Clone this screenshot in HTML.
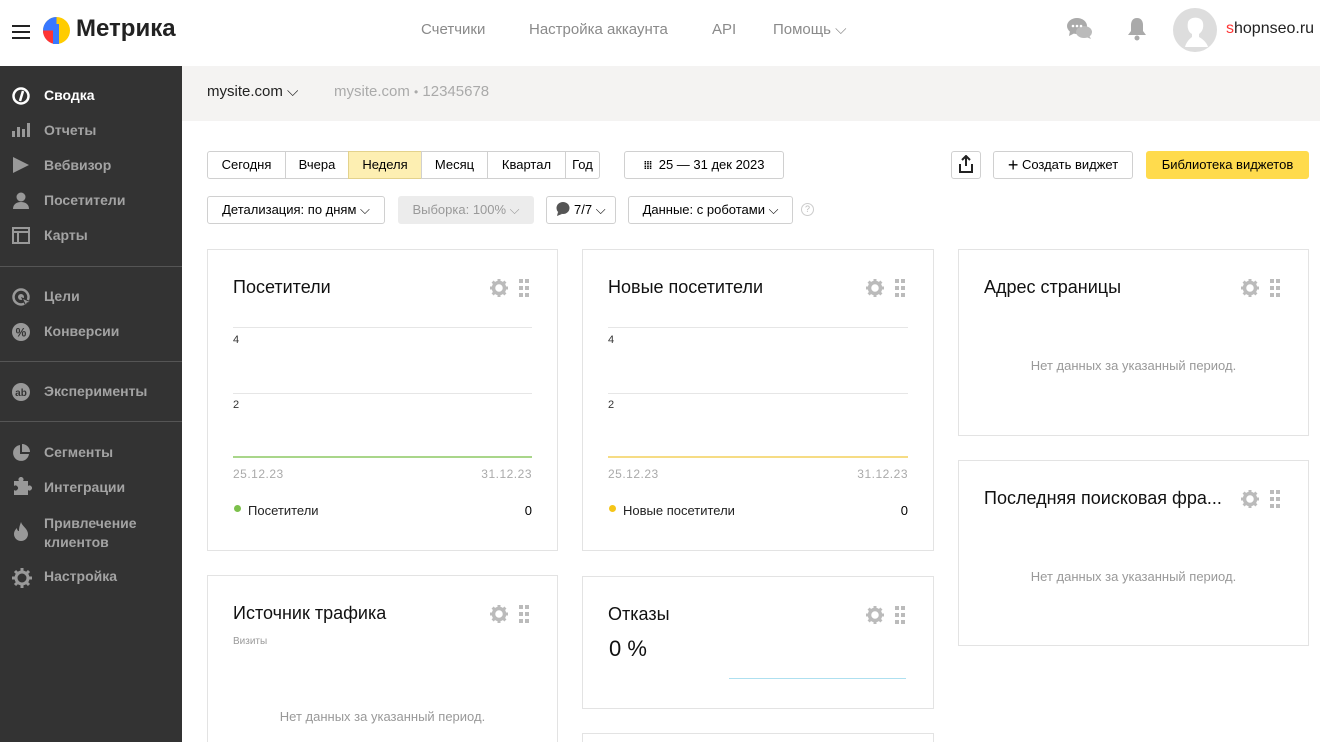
<!DOCTYPE html>
<html style="width:1320px;height:742px;overflow:hidden"><head><meta charset="utf-8"><style>
*{box-sizing:border-box;margin:0;padding:0}
body{width:1320px;height:742px;overflow:hidden;background:#fff;font-family:"Liberation Sans",Arial,sans-serif;position:relative;color:#000}
.a{position:absolute;white-space:nowrap}
.nav{font-size:15px;color:#8a8a8a;top:21px}
.side{position:absolute;left:0;top:66px;width:182px;height:676px;background:#333}
.si{position:absolute;left:44px;font-size:14px;font-weight:bold;color:#a3a3a3}
.ic{position:absolute;left:12px}
.sep{position:absolute;left:0;width:182px;height:1px;background:#555}
.btn{position:absolute;height:28px;border:1px solid #d0d0d0;border-radius:3px;font-size:13px;line-height:26px;text-align:center;background:#fff}
.card{position:absolute;border:1px solid #e3e3e3;background:#fff}
.ct{position:absolute;left:25px;top:27px;font-size:18px;color:#111}
.tools{position:absolute;right:24px;top:28px;width:43px;height:20px}
.nd{position:absolute;left:0;right:0;text-align:center;font-size:13px;color:#999}
.gl{position:absolute;left:25px;right:25px;height:1px;background:#e6e6e6}
.sm{position:absolute;font-size:11px;color:#333}
.dt{position:absolute;font-size:12px;color:#aaa;letter-spacing:.5px}
</style></head><body>
<svg width="0" height="0" style="position:absolute"><defs>
<g id="tl">
<g transform="translate(9,10)"><circle r="5.5" fill="none" stroke="#bbb" stroke-width="3.5"/><g stroke="#bbb" stroke-width="3"><path d="M0-9V-5M0 5V9M-9 0H-5M5 0H9M-6.4-6.4L-4-4M4 4L6.4 6.4M6.4-6.4L4-4M-4 4L-6.4 6.4"/></g></g>
<g fill="#bbb"><rect x="29" y="1" width="4" height="4"/><rect x="35" y="1" width="4" height="4"/><rect x="29" y="8" width="4" height="4"/><rect x="35" y="8" width="4" height="4"/><rect x="29" y="15" width="4" height="4"/><rect x="35" y="15" width="4" height="4"/></g>
</g></defs></svg>
<!-- header -->
<div class="a" style="left:12px;top:25px;width:18px">
<div style="height:2px;background:#222;margin-bottom:4px"></div><div style="height:2px;background:#222;margin-bottom:4px"></div><div style="height:2px;background:#222"></div></div>
<svg class="a" style="left:43px;top:17px" width="27" height="27" viewBox="0 0 27 27">
<circle cx="13.5" cy="13.5" r="13.5" fill="#ffcc00"/>
<path d="M13.5 0A13.5 13.5 0 0 0 0 13.5 13.5 13.5 0 0 0 13.5 27Z" fill="#3878ff"/>
<path d="M0 13.5A13.5 13.5 0 0 0 10 26.6L10 13.5Z" fill="#ff3333"/>
<rect x="10" y="7" width="6" height="20" fill="#3878ff"/></svg>
<div class="a" style="left:76px;top:15px;font-size:24px;font-weight:bold;color:#222">Метрика</div>
<div class="a nav" style="left:421px">Счетчики</div>
<div class="a nav" style="left:529px">Настройка аккаунта</div>
<div class="a nav" style="left:712px">API</div>
<div class="a nav" style="left:773px">Помощь ⌵</div>
<svg class="a" style="left:1067px;top:17px" width="26" height="24" viewBox="0 0 26 24"><ellipse cx="10" cy="9" rx="10" ry="8" fill="#aaa"/><path d="M3 14l-1 5 6-3z" fill="#aaa"/><ellipse cx="17" cy="15" rx="8" ry="6" fill="#bbb"/><path d="M22 18l2 4-5-2z" fill="#bbb"/><circle cx="6" cy="9" r="1.3" fill="#fff"/><circle cx="10" cy="9" r="1.3" fill="#fff"/><circle cx="14" cy="9" r="1.3" fill="#fff"/></svg>
<svg class="a" style="left:1127px;top:17px" width="20" height="24" viewBox="0 0 20 24"><path d="M10 1c4 0 6 3 6 7v6l3 4H1l3-4V8c0-4 2-7 6-7z" fill="#aaa"/><circle cx="10" cy="21" r="2.5" fill="#aaa"/></svg>
<svg class="a" style="left:1173px;top:8px" width="44" height="44" viewBox="0 0 44 44"><circle cx="22" cy="22" r="22" fill="#ddd"/><path d="M15 14c2-6 14-6 15 1 1 5-1 9-4 11v3c4 2 8 6 9 10H12c1-4 4-8 7-10v-3c-4-2-5-7-4-12z" fill="#fff"/></svg>
<div class="a" style="left:1226px;top:20px;font-size:16px;color:#222"><span style="color:#f33">s</span>hopnseo.ru</div>
<!-- sidebar -->
<div class="side">
<svg class="ic" style="top:21px" width="18" height="18" viewBox="0 0 18 18"><circle cx="9" cy="9" r="7.5" fill="none" stroke="#fff" stroke-width="2.5"/><path d="M11 4L8 14" stroke="#fff" stroke-width="2.5"/></svg>
<div class="si" style="top:21px;color:#fff">Сводка</div>
<svg class="ic" style="top:57px" width="18" height="14"><rect x="0" y="8" width="3" height="6" fill="#999"/><rect x="5" y="4" width="3" height="10" fill="#999"/><rect x="10" y="6" width="3" height="8" fill="#999"/><rect x="15" y="0" width="3" height="14" fill="#999"/></svg>
<div class="si" style="top:56px">Отчеты</div>
<svg class="ic" style="top:91px" width="18" height="16"><path d="M1 0L17 8 1 16z" fill="#999"/></svg>
<div class="si" style="top:91px">Вебвизор</div>
<svg class="ic" style="top:126px" width="18" height="17"><circle cx="9" cy="5" r="4.5" fill="#999"/><path d="M1 17c0-5 4-7 8-7s8 2 8 7z" fill="#999"/></svg>
<div class="si" style="top:126px">Посетители</div>
<svg class="ic" style="top:161px" width="18" height="17"><rect x="1" y="1" width="16" height="15" fill="none" stroke="#999" stroke-width="2"/><path d="M1 5H17M6 5V16" stroke="#999" stroke-width="2"/></svg>
<div class="si" style="top:161px">Карты</div>
<div class="sep" style="top:200px"></div>
<svg class="ic" style="top:222px" width="20" height="18"><circle cx="9" cy="9" r="7.5" fill="none" stroke="#999" stroke-width="2.5"/><circle cx="9" cy="9" r="3" fill="#999"/><path d="M10 10l9 4-4 1-1 3z" fill="#999" stroke="#333"/></svg>
<div class="si" style="top:222px">Цели</div>
<svg class="ic" style="top:257px" width="18" height="18"><circle cx="9" cy="9" r="9" fill="#999"/><text x="9" y="13.5" font-size="12" font-weight="bold" text-anchor="middle" fill="#333" font-family="Liberation Sans">%</text></svg>
<div class="si" style="top:257px">Конверсии</div>
<div class="sep" style="top:295px"></div>
<svg class="ic" style="top:317px" width="18" height="18"><circle cx="9" cy="9" r="9" fill="#999"/><text x="9" y="13" font-size="10" font-weight="bold" text-anchor="middle" fill="#333" font-family="Liberation Sans">ab</text></svg>
<div class="si" style="top:317px">Эксперименты</div>
<div class="sep" style="top:355px"></div>
<svg class="ic" style="top:378px" width="18" height="18"><path d="M8 1A8 8 0 1 0 17 10H8z" fill="#999"/><path d="M10 0A8 8 0 0 1 18 8H10z" fill="#999"/></svg>
<div class="si" style="top:378px">Сегменты</div>
<svg class="ic" style="top:411px" width="20" height="18"><path d="M2 4h5a2.5 2.5 0 1 1 4 0h5v5a2.5 2.5 0 1 1 0 4v5H2v-5a2.5 2.5 0 1 0 0-4z" fill="#999"/></svg>
<div class="si" style="top:413px">Интеграции</div>
<svg class="ic" style="top:456px" width="18" height="20"><path d="M9 0c1 4 7 7 7 12a7 7 0 0 1-14 0c0-3 2-5 3-6 0 2 1 3 2 3 0-4 1-6 2-9z" fill="#999"/></svg>
<div class="si" style="top:448px;line-height:19px">Привлечение<br>клиентов</div>
<svg class="ic" style="top:502px" width="20" height="20" viewBox="0 0 20 20"><circle cx="10" cy="10" r="6" fill="none" stroke="#999" stroke-width="3"/><g stroke="#999" stroke-width="3"><path d="M10 0v4M10 16v4M0 10h4M16 10h4M3 3l3 3M14 14l3 3M17 3l-3 3M6 14l-3 3"/></g></svg>
<div class="si" style="top:502px">Настройка</div>
</div>
<!-- site bar -->
<div class="a" style="left:182px;top:66px;width:1138px;height:55px;background:#f4f3f2"></div>
<div class="a" style="left:207px;top:83px;font-size:15px;color:#222">mysite.com ⌵</div>
<div class="a" style="left:334px;top:83px;font-size:15px;color:#aaa">mysite.com <span style="font-size:12px">•</span> 12345678</div>
<!-- toolbar -->
<div class="btn" style="left:207px;top:151px;width:79px;border-radius:3px 0 0 3px">Сегодня</div>
<div class="btn" style="left:285px;top:151px;width:64px;border-radius:0">Вчера</div>
<div class="btn" style="left:348px;top:151px;width:74px;border-radius:0;background:#fdefb2;border-color:#e3d28c">Неделя</div>
<div class="btn" style="left:421px;top:151px;width:67px;border-radius:0">Месяц</div>
<div class="btn" style="left:487px;top:151px;width:79px;border-radius:0">Квартал</div>
<div class="btn" style="left:565px;top:151px;width:35px;border-radius:0 3px 3px 0">Год</div>
<div class="btn" style="left:624px;top:151px;width:160px"><b style="letter-spacing:-1px;font-size:11px">⁞⁞⁞</b>&nbsp; 25 — 31 дек 2023</div>
<div class="btn" style="left:951px;top:151px;width:30px"><svg width="14" height="18" viewBox="0 0 14 18" style="vertical-align:-4px"><path d="M7 1v10M3 5l4-4 4 4" fill="none" stroke="#222" stroke-width="2"/><path d="M1 9v8h12V9" fill="none" stroke="#222" stroke-width="2"/></svg></div>
<div class="btn" style="left:993px;top:151px;width:140px"><span style="font-size:18px;vertical-align:-2px">+</span> Создать виджет</div>
<div class="btn" style="left:1146px;top:151px;width:163px;background:#ffdb4d;border-color:#ffdb4d">Библиотека виджетов</div>
<div class="btn" style="left:207px;top:196px;width:178px">Детализация: по дням ⌵</div>
<div class="btn" style="left:398px;top:196px;width:136px;background:#ececec;border-color:#ececec;color:#999">Выборка: 100% ⌵</div>
<div class="btn" style="left:546px;top:196px;width:70px"><svg width="14" height="14" style="vertical-align:-2px"><ellipse cx="7" cy="6" rx="6.5" ry="6" fill="#555"/><path d="M2 10l-1 4 5-2z" fill="#555"/></svg> 7/7 ⌵</div>
<div class="btn" style="left:628px;top:196px;width:165px">Данные: с роботами ⌵</div>
<div class="a" style="left:801px;top:203px;width:13px;height:13px;border:1px solid #ccc;border-radius:50%;font-size:9px;color:#bbb;text-align:center;line-height:11px">?</div>
<!-- cards -->
<div class="card" style="left:207px;top:249px;width:351px;height:302px">
<div class="ct">Посетители</div><svg class="tools"><use href="#tl"/></svg>
<div class="gl" style="top:77px"></div><div class="sm" style="left:25px;top:84px">4</div>
<div class="gl" style="top:143px"></div><div class="sm" style="left:25px;top:149px">2</div>
<div class="gl" style="top:206px;height:2px;background:#a9d68a"></div>
<div class="dt" style="left:25px;top:217px">25.12.23</div><div class="dt" style="right:25px;top:217px">31.12.23</div>
<div class="a" style="left:26px;top:255px;width:7px;height:7px;border-radius:50%;background:#7cc04b"></div>
<div class="a" style="left:40px;top:253px;font-size:13px;color:#222">Посетители</div>
<div class="a" style="right:25px;top:253px;font-size:13px">0</div>
</div>
<div class="card" style="left:582px;top:249px;width:352px;height:302px">
<div class="ct">Новые посетители</div><svg class="tools"><use href="#tl"/></svg>
<div class="gl" style="top:77px"></div><div class="sm" style="left:25px;top:84px">4</div>
<div class="gl" style="top:143px"></div><div class="sm" style="left:25px;top:149px">2</div>
<div class="gl" style="top:206px;height:2px;background:#f6dc84"></div>
<div class="dt" style="left:25px;top:217px">25.12.23</div><div class="dt" style="right:25px;top:217px">31.12.23</div>
<div class="a" style="left:26px;top:255px;width:7px;height:7px;border-radius:50%;background:#f5c518"></div>
<div class="a" style="left:40px;top:253px;font-size:13px;color:#222">Новые посетители</div>
<div class="a" style="right:25px;top:253px;font-size:13px">0</div>
</div>
<div class="card" style="left:958px;top:249px;width:351px;height:187px">
<div class="ct">Адрес страницы</div><svg class="tools"><use href="#tl"/></svg>
<div class="nd" style="top:108px">Нет данных за указанный период.</div>
</div>
<div class="card" style="left:958px;top:460px;width:351px;height:186px">
<div class="ct">Последняя поисковая фра...</div><svg class="tools"><use href="#tl"/></svg>
<div class="nd" style="top:108px">Нет данных за указанный период.</div>
</div>
<div class="card" style="left:207px;top:575px;width:351px;height:200px">
<div class="ct">Источник трафика</div><svg class="tools"><use href="#tl"/></svg>
<div class="a" style="left:25px;top:60px;font-size:10px;color:#999">Визиты</div>
<div class="nd" style="top:133px">Нет данных за указанный период.</div>
</div>
<div class="card" style="left:582px;top:576px;width:352px;height:133px">
<div class="ct">Отказы</div><svg class="tools"><use href="#tl"/></svg>
<div class="a" style="left:26px;top:59px;font-size:22px;color:#111">0 %</div>
<div class="a" style="left:146px;top:101px;width:177px;height:1px;background:#aee0f0"></div>
</div>
<div class="card" style="left:582px;top:733px;width:352px;height:40px"></div>
</body></html>
